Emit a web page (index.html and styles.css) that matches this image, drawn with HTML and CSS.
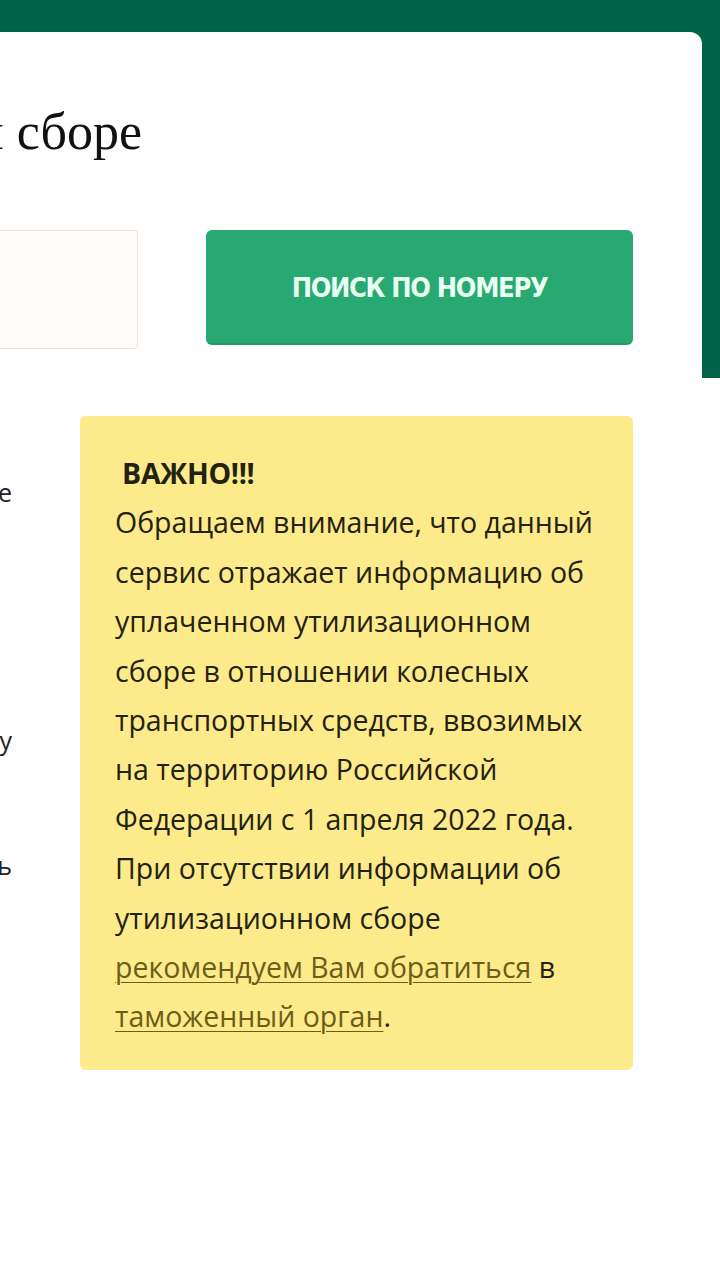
FILE: index.html
```html
<!DOCTYPE html>
<html lang="ru">
<head>
<meta charset="utf-8">
<title>Информация об утилизационном сборе</title>
<link rel="stylesheet" href="styles.css">
</head>
<body>
<div class="page">
  <main class="card">
    <div class="title-row">
      <h1 class="title">Информация об утилизационном сборе</h1>
    </div>
    <div class="form-row">
      <div class="input-wrap"><input class="field" type="text" aria-label="Номер"></div>
      <button class="search-btn" type="button">ПОИСК ПО НОМЕРУ</button>
    </div>
    <div class="content-row">
      <div class="side">
        <p class="side-line l1"><span>Для получения сведений об уплате введите</span></p>
        <p class="side-line l2"><span>номер транспортного средства в форму</span></p>
        <p class="side-line l3"><span>и нажмите кнопку, чтобы проверить</span></p>
      </div>
      <aside class="notice">
        <p class="notice-head">&nbsp;ВАЖНО!!!</p>
        <p class="notice-text">Обращаем внимание, что данный<br>сервис отражает информацию об<br>уплаченном утилизационном<br>сборе в отношении колесных<br>транспортных средств, ввозимых<br>на территорию Российской<br>Федерации с 1 апреля 2022 года.<br>При отсутствии информации об<br>утилизационном сборе<br><a href="#" class="link">рекомендуем Вам обратиться</a> в<br><a href="#" class="link">таможенный орган</a>.</p>
      </aside>
    </div>
  </main>
</div>
</body>
</html>
```
FILE: styles.css
```css
html, body {
  margin: 0;
  padding: 0;
}
body {
  width: 720px;
  height: 1280px;
  overflow: hidden;
  background: #ffffff linear-gradient(#006548, #006548) top left / 100% 378px no-repeat;
  font-family: "Open Sans", "Noto Sans", sans-serif;
}
.page {
  padding-top: 32px;
}
.card {
  width: 702px;
  min-height: 1248px;
  background: #ffffff;
  border-top-right-radius: 12px;
  box-sizing: border-box;
  padding-right: 69px;
}
.title-row {
  width: 142px;
  display: flex;
  justify-content: flex-end;
  padding-top: 70px;
}
.title {
  margin: 0;
  white-space: nowrap;
  font-family: "Liberation Serif", "Times New Roman", serif;
  font-weight: normal;
  font-size: 52px;
  line-height: 60px;
  color: #111111;
}
.form-row {
  display: grid;
  grid-template-columns: 138px 1fr;
  column-gap: 68px;
  align-items: start;
  margin-top: 68px;
}
.input-wrap {
  height: 119px;
}
.field {
  display: block;
  width: 100%;
  height: 119px;
  box-sizing: border-box;
  border: 1px solid #f1e3d8;
  border-left: none;
  border-radius: 0 4px 4px 0;
  background: #fffefb;
  outline: none;
}
.search-btn {
  height: 115px;
  border: none;
  border-radius: 6px;
  background: #27a971;
  color: #e8fff2;
  font-family: "DejaVu Sans Condensed", "DejaVu Sans", sans-serif;
  font-weight: bold;
  font-size: 27px;
  letter-spacing: -1.3px;
  box-shadow: inset 0 -2px 0 rgba(0, 0, 0, 0.08);
  cursor: pointer;
}
.content-row {
  display: grid;
  grid-template-columns: 12px 1fr;
  column-gap: 68px;
  margin-top: 67px;
}
.side {
  padding-top: 52px;
}
.side-line {
  margin: 0;
  display: flex;
  justify-content: flex-end;
  white-space: nowrap;
  font-size: 25px;
  line-height: 49px;
  color: #222222;
}
.side-line.l2 {
  margin-top: 199px;
}
.side-line.l3 {
  margin-top: 76px;
}
.notice {
  background: #fdea8b;
  border-radius: 6px;
  padding: 33px 8px 28px 35px;
  color: #23220f;
  font-size: 26px;
  line-height: 49.4px;
}
.notice p {
  margin: 0;
}
.notice-head {
  font-weight: bold;
  font-size: 28.5px;
  letter-spacing: -0.3px;
}
.notice-text {
  font-size: 28.5px;
  white-space: nowrap;
}
.link {
  color: #6c5e19;
  text-decoration: underline;
  text-underline-offset: 4px;
  text-decoration-thickness: 1px;
}
```
